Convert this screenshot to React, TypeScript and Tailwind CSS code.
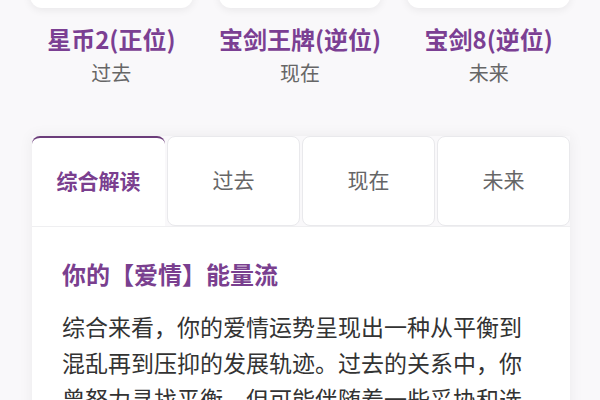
const cards = [
  { name: "星币2(正位)", pos: "过去" },
  { name: "宝剑王牌(逆位)", pos: "现在" },
  { name: "宝剑8(逆位)", pos: "未来" },
];

const tabs = ["综合解读", "过去", "现在", "未来"];

export default function App() {
  return (
    <div className="h-[400px] overflow-hidden bg-[#f9f8fa] font-['Noto_Sans_CJK_SC','Noto_Sans',sans-serif]">
      <div className="grid grid-cols-3 gap-[26px] px-[30px]">
        {cards.map((c) => (
          <div key={c.pos} className="flex flex-col items-center">
            <div className="-mt-[112px] h-[120px] w-full rounded-xl bg-white shadow-[0_2px_8px_rgba(0,0,0,0.07)]" />
            <div className="mt-[13px] text-[24px] leading-[36px] font-semibold text-[#7b3f93]">
              {c.name}
            </div>
            <div className="text-[20px] leading-[32px] text-[#666]">{c.pos}</div>
          </div>
        ))}
      </div>

      <div className="mx-[32px] mt-[47px] w-[538px] shadow-[0_0_14px_rgba(0,0,0,0.06)]">
        <div className="grid h-[90px] grid-cols-4 gap-[2px]">
          {tabs.map((t, i) =>
            i === 0 ? (
              <div
                key={t}
                className="flex items-center justify-center rounded-t-lg border-t-2 border-[#6b3d7a] bg-white pb-[2px] text-[21px] font-semibold text-[#7a3f8f]"
              >
                {t}
              </div>
            ) : (
              <div
                key={t}
                className="flex items-center justify-center rounded-lg border border-[#e9e9ec] bg-white pb-[2px] text-[21px] text-[#666]"
              >
                {t}
              </div>
            )
          )}
        </div>
        <div className="border-t border-[#efeff1] bg-white px-[30px] pt-[29px] pb-6">
          <h3 className="text-[24px] leading-[36px] font-semibold text-[#7a3f8f]">
            你的【爱情】能量流
          </h3>
          <p className="mt-[16px] text-[23px] leading-[36px] text-[#333]">
            综合来看，你的爱情运势呈现出一种从平衡到混乱再到压抑的发展轨迹。过去的关系中，你曾努力寻找平衡，但可能伴随着一些妥协和选择。
          </p>
        </div>
      </div>
    </div>
  );
}
